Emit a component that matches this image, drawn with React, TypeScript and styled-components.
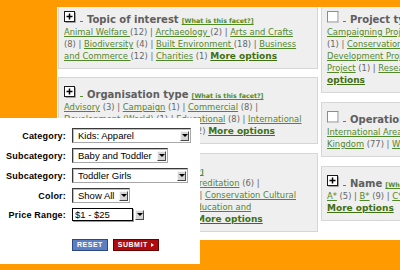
import React from 'react'
import styled, { createGlobalStyle } from 'styled-components'

const Global = createGlobalStyle`
  html, body { margin: 0; padding: 0; }
  body { font-family: "DejaVu Sans", Verdana, sans-serif; }
`

const Stage = styled.div`
  position: relative;
  width: 400px;
  height: 270px;
  overflow: hidden;
  background: #ff9a00;
  padding: 7px 0 0 57px;
  box-sizing: border-box;
`

const Page = styled.div`
  width: 420px;
  height: 233px;
  background: #fff;
  display: flex;
  align-items: flex-start;
  gap: 3px;
  padding-left: 1px;
  box-sizing: border-box;
`

const Column = styled.div`
  width: 260px;
  flex-shrink: 0;
  display: flex;
  flex-direction: column;
`

const Facet = styled.div<{ $cropped?: boolean; $gap?: number }>`
  background: #efefef;
  border: 1px solid #d6d6d6;
  border-top-color: ${({ $cropped }) => ($cropped ? '#efefef' : '#d6d6d6')};
  padding: ${({ $cropped }) => ($cropped ? 0 : 5)}px 6px 6px 5px;
  margin-bottom: ${({ $gap }) => $gap ?? 8}px;
  overflow: hidden;
`

const TitleRow = styled.div`
  height: 18px;
  display: flex;
  align-items: center;
  white-space: nowrap;
`

const Dash = styled.span`
  width: 3px;
  height: 1px;
  background: #5a8c2c;
  margin: 9px 4px 0 4px;
`

const Title = styled.span`
  font-size: 10px;
  font-weight: bold;
  color: #5e5e5e;
`

const WhatLink = styled.a`
  margin-left: 3px;
  font-size: 6.3px;
  font-weight: bold;
  color: #4f8a24;
  text-decoration: underline;
`

const Line = styled.div`
  height: 12px;
  line-height: 12px;
  font-size: 8.4px;
  white-space: nowrap;
  color: #666;
`

const Link = styled.a`
  color: #52882a;
  text-decoration: underline;
`

const More = styled.a`
  font-size: 9px;
  font-weight: bold;
  color: #3f7012;
  text-decoration: underline;
`

const Panel = styled.div`
  position: absolute;
  left: 0;
  top: 118px;
  width: 200px;
  height: 146px;
  background: #fff;
  padding-top: 10px;
  box-sizing: border-box;
`

const Form = styled.div`
  display: grid;
  grid-template-columns: 66px auto;
  column-gap: 6px;
  row-gap: 5px;
  align-items: center;
  justify-items: start;
`

const Label = styled.label`
  justify-self: end;
  font-family: "Liberation Sans", Arial, sans-serif;
  font-size: 9px;
  font-weight: bold;
  color: #000;
  letter-spacing: 0.2px;
`

const Select = styled.div<{ $w: number }>`
  width: ${({ $w }) => $w}px;
  height: 15px;
  box-sizing: border-box;
  background: #fff;
  border-style: solid;
  border-width: 1px;
  border-color: #3a3a3a #a8a8a8 #a8a8a8 #3a3a3a;
  box-shadow: inset 1px 1px 0 #bdbdbd;
  display: flex;
  align-items: center;
  justify-content: space-between;
  padding: 0 1px 0 5px;
  font-family: "Liberation Sans", Arial, sans-serif;
  font-size: 9.5px;
  color: #000;
`

const Field = styled.div`
  width: 61px;
  height: 13px;
  box-sizing: border-box;
  border: 1px solid #000;
  box-shadow: 1px 1px 0 #9a9a9a;
  background: #fff;
  display: flex;
  align-items: center;
  padding-left: 2px;
  font-family: "Liberation Sans", Arial, sans-serif;
  font-size: 9.5px;
  color: #000;
`

const PriceWrap = styled.div`
  display: flex;
  align-items: center;
  gap: 2px;
`

const Arrow = styled.span`
  width: 9px;
  height: 10px;
  box-sizing: border-box;
  background: #d4d4d4;
  border-style: solid;
  border-width: 1px;
  border-color: #f4f4f4 #4a4a4a #4a4a4a #f4f4f4;
  display: flex;
  align-items: center;
  justify-content: center;
  &::after {
    content: '';
    border-left: 3px solid transparent;
    border-right: 3px solid transparent;
    border-top: 3px solid #000;
  }
`

const Buttons = styled.div`
  display: flex;
  gap: 5px;
  margin: 18px 0 0 72px;
`

const Btn = styled.button<{ $tone: 'blue' | 'red' }>`
  height: 12px;
  padding: 0 4px;
  border: 1px solid ${({ $tone }) => ($tone === 'blue' ? '#2f4780' : '#650000')};
  background: ${({ $tone }) => ($tone === 'blue' ? '#5b7fc3' : '#b00a0a')};
  color: #fff;
  font-family: "Liberation Sans", Arial, sans-serif;
  font-size: 7px;
  font-weight: bold;
  letter-spacing: 0.5px;
  line-height: 10px;
  display: flex;
  align-items: center;
  gap: 3px;
  cursor: pointer;
`

const Tri = styled.span`
  border-top: 2.5px solid transparent;
  border-bottom: 2.5px solid transparent;
  border-left: 3px solid #fff;
`

function PlusIcon() {
  return (
    <svg width="12" height="12" viewBox="0 0 12 12">
      <rect x="0.5" y="0.5" width="10" height="10" fill="#fff" stroke="#1a1a1a" />
      <path d="M11.5 1.5v10h-10" stroke="#a0a0a0" fill="none" />
      <path d="M2.5 5.5h6M5.5 2.5v6" stroke="#000" strokeWidth="1.5" />
    </svg>
  )
}

function BoxIcon() {
  return (
    <svg width="12" height="12" viewBox="0 0 12 12">
      <rect x="0.5" y="0.5" width="10.5" height="10.5" fill="#fff" stroke="#8c8c8c" />
      <path d="M11.5 1v10.5H1" stroke="#c8c8c8" fill="none" />
    </svg>
  )
}

// {link} , #more options# , everything else is plain count text
const renderLine = (s: string) =>
  s
    .split(/(\{[^}]*\}|#[^#]*#)/)
    .filter(Boolean)
    .map((p, i) =>
      p.startsWith('{') ? (
        <Link key={i}>{p.slice(1, -1)}</Link>
      ) : p.startsWith('#') ? (
        <More key={i}>{p.slice(1, -1)}</More>
      ) : (
        <span key={i}>{p}</span>
      )
    )

type FacetData = {
  title: string
  icon: 'plus' | 'box'
  what?: boolean
  cropped?: boolean
  gap?: number
  lines: string[]
}

const left: FacetData[] = [
  {
    title: 'Topic of interest',
    icon: 'plus',
    what: true,
    cropped: true,
    lines: [
      '{Animal Welfare }(12) | {Archaeology }(2) | {Arts and Crafts}',
      '(8) | {Biodiversity} (4) | {Built Environment }(18) | {Business}',
      '{and Commerce }(12) | {Charities} (1) #More options#',
    ],
  },
  {
    title: 'Organisation type',
    icon: 'plus',
    what: true,
    gap: 9,
    lines: [
      '{Advisory} (3) | {Campaign} (1) | {Commercial} (8) |',
      '{Development (World)} (1) | {Educational} (8) | {International}',
      '{Development (UK)} (4) | {Local} (12) #More options#',
    ],
  },
  {
    title: 'Service',
    icon: 'plus',
    what: true,
    lines: [
      '{Advice and Information} (3) | {Accreditation} (6) |',
      '{Campaigning} (2) | {Children} (11) | {Conservation Cultural}',
      '{Heritage} (5) | {Disabilities} (7) | {Education and}',
      '{Environment} (3) | {Funding} (14) #More options#',
    ],
  },
]

const right: FacetData[] = [
  {
    title: 'Project type',
    icon: 'box',
    cropped: true,
    gap: 9,
    lines: [
      '{Campaigning Project} (2) | {Capacity}',
      '(1) | {Conservation Project} (4) |',
      '{Development Project} (6) |',
      '{Project} (1) | {Research Project} (2) #More#',
      '#options#',
    ],
  },
  {
    title: 'Operational area',
    icon: 'box',
    gap: 9,
    lines: ['{International Area} (12) | {United}', '{Kingdom} (77) | {Wales} (4)'],
  },
  {
    title: 'Name',
    icon: 'plus',
    what: true,
    lines: ['{A*} (5) | {B*} (9) | {C*} (11) | {D*} (6)', '#More options#'],
  },
]

function FacetBox({ f }: { f: FacetData }) {
  return (
    <Facet $cropped={f.cropped} $gap={f.gap}>
      <TitleRow>
        {f.icon === 'plus' ? <PlusIcon /> : <BoxIcon />}
        <Dash />
        <span>
          <Title>{f.title}</Title>
          {f.what && <WhatLink>[What is this facet?]</WhatLink>}
        </span>
      </TitleRow>
      {f.lines.map((l, i) => (
        <Line key={i}>{renderLine(l)}</Line>
      ))}
    </Facet>
  )
}

export default function App() {
  return (
    <>
      <Global />
      <Stage>
        <Page>
          <Column>
            {left.map((f) => (
              <FacetBox key={f.title} f={f} />
            ))}
          </Column>
          <Column>
            {right.map((f) => (
              <FacetBox key={f.title} f={f} />
            ))}
          </Column>
        </Page>

        <Panel>
          <Form>
            <Label>Category:</Label>
            <Select $w={119}>
              Kids: Apparel <Arrow />
            </Select>
            <Label>Subcategory:</Label>
            <Select $w={96}>
              Baby and Toddler <Arrow />
            </Select>
            <Label>Subcategory:</Label>
            <Select $w={116}>
              Toddler Girls <Arrow />
            </Select>
            <Label>Color:</Label>
            <Select $w={58}>
              Show All <Arrow />
            </Select>
            <Label>Price Range:</Label>
            <PriceWrap>
              <Field>$1 - $25</Field>
              <Arrow />
            </PriceWrap>
          </Form>
          <Buttons>
            <Btn $tone="blue">RESET</Btn>
            <Btn $tone="red">
              SUBMIT <Tri />
            </Btn>
          </Buttons>
        </Panel>
      </Stage>
    </>
  )
}
